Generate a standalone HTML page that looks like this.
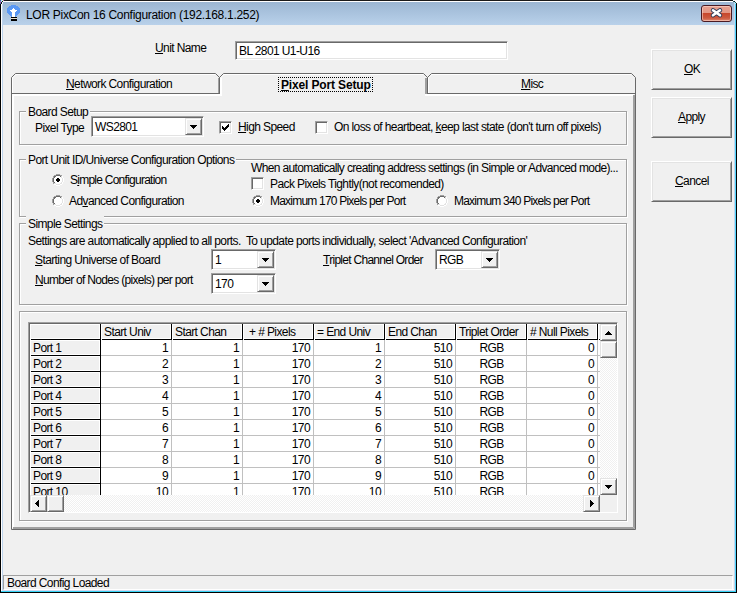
<!DOCTYPE html><html><head><meta charset="utf-8"><style>
*{box-sizing:border-box}
html,body{margin:0;padding:0}
body{width:737px;height:593px;overflow:hidden;background:#f0f0f0;position:relative;font-family:"Liberation Sans",sans-serif;font-size:11px;color:#000}
.a{position:absolute}
.t{position:absolute;white-space:nowrap;line-height:13px;letter-spacing:-0.6px;font-size:12px}
.u{text-decoration:underline;text-underline-offset:1px}
.sunk{position:absolute;background:#fff;border:1px solid;border-color:#a0a0a0 #fff #fff #a0a0a0;box-shadow:inset 1px 1px #696969,inset -1px -1px #e3e3e3}
.btn{position:absolute;background:#f0f0f0;border:1px solid;border-color:#fff #696969 #696969 #fff;box-shadow:inset 1px 1px #e3e3e3,inset -1px -1px #a0a0a0}
.sbtn{position:absolute;background:#f0f0f0;border:1px solid;border-color:#e3e3e3 #696969 #696969 #e3e3e3;box-shadow:inset 1px 1px #fff,inset -1px -1px #a0a0a0}
.grp{position:absolute;border:1px solid;border-color:#a0a0a0 #fff #fff #a0a0a0;box-shadow:inset -1px -1px #a0a0a0, 1px 1px #fff}
.lbl{position:absolute;background:#f0f0f0;white-space:nowrap;line-height:13px;letter-spacing:-0.6px;font-size:12px;padding:2px 2px 0 2px}
.chk{position:absolute;width:13px;height:13px;background:#fff;border:1px solid;border-color:#a0a0a0 #fff #fff #a0a0a0;box-shadow:inset 1px 1px #696969,inset -1px -1px #e3e3e3}
.hl{position:absolute;height:1px}
.vl{position:absolute;width:1px}
</style></head><body>
<div class="a" style="left:0;top:0;width:737px;height:25px;background:linear-gradient(#99b4d1,#b9d1ea)"></div>
<div class="a" style="left:0;top:0;width:737px;height:1px;background:#1a1a1a"></div>
<div class="a" style="left:1px;top:1px;width:734px;height:1px;background:#fff"></div>
<div class="a" style="left:0;top:0;width:1px;height:593px;background:#000"></div>
<div class="a" style="left:1px;top:1px;width:1px;height:591px;background:#fff"></div>
<div class="a" style="left:2px;top:2px;width:1px;height:589px;background:#bcd3ec"></div>
<div class="a" style="left:736px;top:0;width:1px;height:593px;background:#000"></div>
<div class="a" style="left:735px;top:1px;width:1px;height:591px;background:#4fd3fa"></div>
<div class="a" style="left:734px;top:2px;width:1px;height:589px;background:#c4d6ee"></div>
<div class="a" style="left:0;top:592px;width:737px;height:1px;background:#000"></div>
<div class="a" style="left:1px;top:591px;width:735px;height:1px;background:#36d3f5"></div>
<div class="a" style="left:2px;top:590px;width:733px;height:1px;background:#d0d8f0"></div>
<div class="a" style="left:3px;top:589px;width:731px;height:1px;background:#fff"></div>
<svg class="a" style="left:0;top:0" width="5" height="5"><path d="M0 0h1v1h-1zM0 3h1v1h-1z" fill="#4a6ab0"/><path d="M1 0h1v1h-1zM1 1h1v1h-1z" fill="#9ee6f8"/><path d="M2 0h1v1h-1z" fill="#f0f0c0"/><path d="M3 0h1v1h-1zM0 1h1v1h-1zM0 2h1v1h-1z" fill="#a060b0"/><path d="M2 1h1v1h-1zM1 2h1v1h-1zM1 3h1v1h-1z" fill="#111"/><path d="M2 2h1v1h-1zM2 3h1v1h-1z" fill="#f4f8fc"/></svg>
<svg class="a" style="left:732px;top:0" width="5" height="5"><path d="M1 0h1v1h-1zM2 0h1v1h-1zM3 0h1v1h-1zM4 0h1v1h-1zM3 1h1v1h-1zM4 1h1v1h-1zM4 2h1v1h-1z" fill="#fff"/><path d="M1 1h1v1h-1zM3 2h1v1h-1z" fill="#1e5a60"/><path d="M2 1h1v1h-1zM4 3h1v1h-1z" fill="#111"/><path d="M2 2h1v1h-1zM3 3h1v1h-1z" fill="#a8ecf8"/></svg>
<svg class="a" style="left:7px;top:5px" width="14" height="16"><path d="M4 0h1v1h-1zM5 0h1v1h-1zM6 0h1v1h-1zM7 0h1v1h-1zM8 0h1v1h-1zM2 1h1v1h-1zM3 1h1v1h-1zM4 1h1v1h-1zM5 1h1v1h-1zM6 1h1v1h-1zM7 1h1v1h-1zM8 1h1v1h-1zM9 1h1v1h-1zM10 1h1v1h-1zM1 2h1v1h-1zM2 2h1v1h-1zM3 2h1v1h-1zM4 2h1v1h-1zM5 2h1v1h-1zM6 2h1v1h-1zM7 2h1v1h-1zM8 2h1v1h-1zM9 2h1v1h-1zM10 2h1v1h-1zM11 2h1v1h-1zM0 3h1v1h-1zM1 3h1v1h-1zM2 3h1v1h-1zM3 3h1v1h-1zM4 3h1v1h-1zM5 3h1v1h-1zM7 3h1v1h-1zM8 3h1v1h-1zM9 3h1v1h-1zM10 3h1v1h-1zM11 3h1v1h-1zM12 3h1v1h-1zM0 4h1v1h-1zM1 4h1v1h-1zM2 4h1v1h-1zM3 4h1v1h-1zM4 4h1v1h-1zM8 4h1v1h-1zM9 4h1v1h-1zM10 4h1v1h-1zM11 4h1v1h-1zM12 4h1v1h-1zM0 5h1v1h-1zM1 5h1v1h-1zM2 5h1v1h-1zM10 5h1v1h-1zM11 5h1v1h-1zM12 5h1v1h-1zM0 6h1v1h-1zM1 6h1v1h-1zM2 6h1v1h-1zM3 6h1v1h-1zM9 6h1v1h-1zM10 6h1v1h-1zM11 6h1v1h-1zM12 6h1v1h-1zM0 7h1v1h-1zM1 7h1v1h-1zM2 7h1v1h-1zM3 7h1v1h-1zM4 7h1v1h-1zM8 7h1v1h-1zM9 7h1v1h-1zM10 7h1v1h-1zM11 7h1v1h-1zM12 7h1v1h-1zM1 8h1v1h-1zM2 8h1v1h-1zM3 8h1v1h-1zM4 8h1v1h-1zM8 8h1v1h-1zM9 8h1v1h-1zM10 8h1v1h-1zM11 8h1v1h-1zM2 9h1v1h-1zM3 9h1v1h-1zM4 9h1v1h-1zM8 9h1v1h-1zM9 9h1v1h-1zM10 9h1v1h-1zM3 10h1v1h-1zM4 10h1v1h-1zM8 10h1v1h-1zM9 10h1v1h-1zM4 11h1v1h-1zM8 11h1v1h-1z" fill="#5a98f4"/><path d="M6 3h1v1h-1zM5 4h1v1h-1zM6 4h1v1h-1zM7 4h1v1h-1zM3 5h1v1h-1zM4 5h1v1h-1zM5 5h1v1h-1zM6 5h1v1h-1zM7 5h1v1h-1zM8 5h1v1h-1zM9 5h1v1h-1zM4 6h1v1h-1zM5 6h1v1h-1zM6 6h1v1h-1zM7 6h1v1h-1zM8 6h1v1h-1zM5 7h1v1h-1zM6 7h1v1h-1zM7 7h1v1h-1zM5 8h1v1h-1zM6 8h1v1h-1zM7 8h1v1h-1zM5 9h1v1h-1zM6 9h1v1h-1zM7 9h1v1h-1zM5 10h1v1h-1zM6 10h1v1h-1zM7 10h1v1h-1zM5 11h1v1h-1zM6 11h1v1h-1zM7 11h1v1h-1z" fill="#fff"/><path d="M4 12h1v1h-1zM5 12h1v1h-1zM6 12h1v1h-1zM7 12h1v1h-1zM8 12h1v1h-1zM9 12h1v1h-1zM4 14h1v1h-1zM5 14h1v1h-1zM6 14h1v1h-1zM7 14h1v1h-1zM8 14h1v1h-1zM9 14h1v1h-1zM4 15h1v1h-1zM5 15h1v1h-1zM6 15h1v1h-1zM7 15h1v1h-1zM8 15h1v1h-1zM9 15h1v1h-1z" fill="#000"/><path d="M4 13h1v1h-1zM5 13h1v1h-1zM6 13h1v1h-1zM7 13h1v1h-1zM8 13h1v1h-1zM9 13h1v1h-1z" fill="#e8e0d0"/></svg>
<div class="t" style="left:26px;top:8px;font-size:12px;letter-spacing:-0.3px;color:#000;line-height:15px">LOR PixCon 16 Configuration (192.168.1.252)</div>
<div class="a" style="left:701px;top:5px;width:31px;height:17px;border:1px solid #4a1a22;border-radius:3px;background:linear-gradient(#e8a291 0%,#e29684 45%,#c8472c 50%,#cc5a40 80%,#e08870 100%);box-shadow:inset 0 0 0 1px rgba(255,220,210,.55)"></div>
<svg class="a" style="left:709px;top:7px" width="15" height="12" viewBox="0 0 15 12"><path d="M4 3.3L11 8.3M11 3.3L4 8.3" stroke="#2e3a58" stroke-width="4.4" stroke-linecap="round"/><path d="M4 3.3L11 8.3M11 3.3L4 8.3" stroke="#fff" stroke-width="2.6" stroke-linecap="round"/></svg>
<div class="t" style="left:155px;top:42px;"><span class="u">U</span>nit Name</div>
<div class="sunk" style="left:235px;top:41px;width:273px;height:19px"></div>
<div class="t" style="left:239px;top:45px;">BL 2801 U1-U16</div>
<div class="btn" style="left:651px;top:49px;width:81px;height:41px"></div>
<div class="t" style="left:684px;top:63px;"><span class="u">O</span>K</div>
<div class="btn" style="left:651px;top:97px;width:81px;height:41px"></div>
<div class="t" style="left:678px;top:111px;"><span class="u">A</span>pply</div>
<div class="btn" style="left:651px;top:161px;width:81px;height:41px"></div>
<div class="t" style="left:675px;top:175px;"><span class="u">C</span>ancel</div>
<svg class="a" style="left:0;top:0" width="737" height="593"><path d="M11.5 94V529.5H635.5V94" fill="none" stroke="#696969"/><path d="M634.5 95V528.5H13M633.5 95V527.5H13" fill="none" stroke="#a0a0a0"/><path d="M11.5 93.5V77.5L15.5 73.5H215.5L219.5 77.5V93.5" fill="none" stroke="#696969"/><path d="M12.5 93V77.9L15.9 74.5H215" fill="none" stroke="#fff"/><path d="M218.5 78V93" fill="none" stroke="#a0a0a0"/><path d="M427.5 93.5V77.5L431.5 73.5H631.5L635.5 77.5V94" fill="none" stroke="#696969"/><path d="M428.5 93V77.9L431.9 74.5H631" fill="none" stroke="#fff"/><path d="M11 93.5H219.5M427 93.5H635" fill="none" stroke="#696969"/><path d="M12 94.5H222M425 94.5H634M12 95.5H222M425 95.5H633" fill="none" stroke="#fff"/><path d="M12.5 94V528M13.5 94V527" fill="none" stroke="#fff"/><path d="M219.5 94V77.5L223.5 73.5H423.5L427.5 77.5V94" fill="none" stroke="#696969"/><path d="M220.5 96V77.9L223.9 74.5H423M221.5 96V78" fill="none" stroke="#fff"/><path d="M426.5 78V94M425.5 78V94" fill="none" stroke="#a0a0a0"/></svg>
<div class="t" style="left:66px;top:78px;"><span class="u">N</span>etwork Configuration</div>
<div class="t" style="left:281px;top:79px;font-weight:bold;letter-spacing:-0.15px"><span class="u">P</span>ixel Port Setup</div>
<div class="a" style="left:278px;top:77px;width:95px;height:15px;border:1px dotted #000"></div>
<div class="t" style="left:521px;top:78px;"><span class="u">M</span>isc</div>
<div class="a" style="left:19px;top:111px;width:608px;height:34px;border:1px solid #a0a0a0;box-shadow:inset 1px 1px #fff,1px 1px #fff"></div>
<div class="lbl" style="left:26px;top:104px">Board Setup</div>
<div class="t" style="left:35px;top:122px;">Pixel Type</div>
<div class="sunk" style="left:91px;top:116px;width:113px;height:21px"></div>
<div class="t" style="left:95px;top:121px;">WS2801</div>
<div class="sbtn" style="left:185px;top:118px;width:17px;height:17px"></div>
<svg class="a" style="left:190px;top:125px" width="7" height="4"><path d="M0 0h1v1h-1zM1 0h1v1h-1zM2 0h1v1h-1zM3 0h1v1h-1zM4 0h1v1h-1zM5 0h1v1h-1zM6 0h1v1h-1zM1 1h1v1h-1zM2 1h1v1h-1zM3 1h1v1h-1zM4 1h1v1h-1zM5 1h1v1h-1zM2 2h1v1h-1zM3 2h1v1h-1zM4 2h1v1h-1zM3 3h1v1h-1z" fill="#000"/></svg>
<div class="chk" style="left:219px;top:121px"></div>
<svg class="a" style="left:222px;top:124px" width="7" height="7"><path d="M6 0h1v1h-1zM5 1h1v1h-1zM6 1h1v1h-1zM0 2h1v1h-1zM4 2h1v1h-1zM5 2h1v1h-1zM6 2h1v1h-1zM0 3h1v1h-1zM1 3h1v1h-1zM3 3h1v1h-1zM4 3h1v1h-1zM5 3h1v1h-1zM0 4h1v1h-1zM1 4h1v1h-1zM2 4h1v1h-1zM3 4h1v1h-1zM4 4h1v1h-1zM1 5h1v1h-1zM2 5h1v1h-1zM3 5h1v1h-1zM2 6h1v1h-1z" fill="#000"/></svg>
<div class="t" style="left:238px;top:121px;"><span class="u">H</span>igh Speed</div>
<div class="chk" style="left:315px;top:121px"></div>
<div class="t" style="left:334px;top:121px;">On loss of heartbeat, <span class="u">k</span>eep last state (don't turn off pixels)</div>
<div class="a" style="left:19px;top:159px;width:608px;height:58px;border:1px solid #a0a0a0;box-shadow:inset 1px 1px #fff,1px 1px #fff"></div>
<div class="lbl" style="left:26px;top:152px">Port Unit ID/Universe Configuration Options</div>
<svg class="a" style="left:52px;top:174px" width="12" height="12"><path d="M4 0h1v1h-1zM5 0h1v1h-1zM6 0h1v1h-1zM7 0h1v1h-1zM2 1h1v1h-1zM3 1h1v1h-1zM8 1h1v1h-1zM9 1h1v1h-1zM1 2h1v1h-1zM1 3h1v1h-1zM0 4h1v1h-1zM0 5h1v1h-1zM0 6h1v1h-1zM0 7h1v1h-1zM1 8h1v1h-1zM1 9h1v1h-1z" fill="#a0a0a0"/><path d="M4 1h1v1h-1zM5 1h1v1h-1zM6 1h1v1h-1zM7 1h1v1h-1zM2 2h1v1h-1zM3 2h1v1h-1zM8 2h1v1h-1zM2 3h1v1h-1zM1 4h1v1h-1zM1 5h1v1h-1zM1 6h1v1h-1zM1 7h1v1h-1zM2 8h1v1h-1z" fill="#696969"/><path d="M4 2h1v1h-1zM5 2h1v1h-1zM6 2h1v1h-1zM7 2h1v1h-1zM10 2h1v1h-1zM3 3h1v1h-1zM4 3h1v1h-1zM5 3h1v1h-1zM6 3h1v1h-1zM7 3h1v1h-1zM8 3h1v1h-1zM10 3h1v1h-1zM2 4h1v1h-1zM3 4h1v1h-1zM4 4h1v1h-1zM7 4h1v1h-1zM8 4h1v1h-1zM9 4h1v1h-1zM11 4h1v1h-1zM2 5h1v1h-1zM3 5h1v1h-1zM8 5h1v1h-1zM9 5h1v1h-1zM11 5h1v1h-1zM2 6h1v1h-1zM3 6h1v1h-1zM8 6h1v1h-1zM9 6h1v1h-1zM11 6h1v1h-1zM2 7h1v1h-1zM3 7h1v1h-1zM4 7h1v1h-1zM7 7h1v1h-1zM8 7h1v1h-1zM9 7h1v1h-1zM11 7h1v1h-1zM3 8h1v1h-1zM4 8h1v1h-1zM5 8h1v1h-1zM6 8h1v1h-1zM7 8h1v1h-1zM8 8h1v1h-1zM10 8h1v1h-1zM4 9h1v1h-1zM5 9h1v1h-1zM6 9h1v1h-1zM7 9h1v1h-1zM10 9h1v1h-1zM2 10h1v1h-1zM3 10h1v1h-1zM8 10h1v1h-1zM9 10h1v1h-1zM4 11h1v1h-1zM5 11h1v1h-1zM6 11h1v1h-1zM7 11h1v1h-1z" fill="#fff"/><path d="M9 2h1v1h-1zM9 3h1v1h-1zM10 4h1v1h-1zM10 5h1v1h-1zM10 6h1v1h-1zM10 7h1v1h-1zM9 8h1v1h-1zM2 9h1v1h-1zM3 9h1v1h-1zM8 9h1v1h-1zM9 9h1v1h-1zM4 10h1v1h-1zM5 10h1v1h-1zM6 10h1v1h-1zM7 10h1v1h-1z" fill="#e3e3e3"/><path d="M5 4h1v1h-1zM6 4h1v1h-1zM4 5h1v1h-1zM5 5h1v1h-1zM6 5h1v1h-1zM7 5h1v1h-1zM4 6h1v1h-1zM5 6h1v1h-1zM6 6h1v1h-1zM7 6h1v1h-1zM5 7h1v1h-1zM6 7h1v1h-1z" fill="#000"/></svg>
<div class="t" style="left:70px;top:174px;letter-spacing:-0.75px">S<span class="u">i</span>mple Configuration</div>
<svg class="a" style="left:52px;top:195px" width="12" height="12"><path d="M4 0h1v1h-1zM5 0h1v1h-1zM6 0h1v1h-1zM7 0h1v1h-1zM2 1h1v1h-1zM3 1h1v1h-1zM8 1h1v1h-1zM9 1h1v1h-1zM1 2h1v1h-1zM1 3h1v1h-1zM0 4h1v1h-1zM0 5h1v1h-1zM0 6h1v1h-1zM0 7h1v1h-1zM1 8h1v1h-1zM1 9h1v1h-1z" fill="#a0a0a0"/><path d="M4 1h1v1h-1zM5 1h1v1h-1zM6 1h1v1h-1zM7 1h1v1h-1zM2 2h1v1h-1zM3 2h1v1h-1zM8 2h1v1h-1zM2 3h1v1h-1zM1 4h1v1h-1zM1 5h1v1h-1zM1 6h1v1h-1zM1 7h1v1h-1zM2 8h1v1h-1z" fill="#696969"/><path d="M4 2h1v1h-1zM5 2h1v1h-1zM6 2h1v1h-1zM7 2h1v1h-1zM10 2h1v1h-1zM3 3h1v1h-1zM4 3h1v1h-1zM5 3h1v1h-1zM6 3h1v1h-1zM7 3h1v1h-1zM8 3h1v1h-1zM10 3h1v1h-1zM2 4h1v1h-1zM3 4h1v1h-1zM4 4h1v1h-1zM5 4h1v1h-1zM6 4h1v1h-1zM7 4h1v1h-1zM8 4h1v1h-1zM9 4h1v1h-1zM11 4h1v1h-1zM2 5h1v1h-1zM3 5h1v1h-1zM4 5h1v1h-1zM5 5h1v1h-1zM6 5h1v1h-1zM7 5h1v1h-1zM8 5h1v1h-1zM9 5h1v1h-1zM11 5h1v1h-1zM2 6h1v1h-1zM3 6h1v1h-1zM4 6h1v1h-1zM5 6h1v1h-1zM6 6h1v1h-1zM7 6h1v1h-1zM8 6h1v1h-1zM9 6h1v1h-1zM11 6h1v1h-1zM2 7h1v1h-1zM3 7h1v1h-1zM4 7h1v1h-1zM5 7h1v1h-1zM6 7h1v1h-1zM7 7h1v1h-1zM8 7h1v1h-1zM9 7h1v1h-1zM11 7h1v1h-1zM3 8h1v1h-1zM4 8h1v1h-1zM5 8h1v1h-1zM6 8h1v1h-1zM7 8h1v1h-1zM8 8h1v1h-1zM10 8h1v1h-1zM4 9h1v1h-1zM5 9h1v1h-1zM6 9h1v1h-1zM7 9h1v1h-1zM10 9h1v1h-1zM2 10h1v1h-1zM3 10h1v1h-1zM8 10h1v1h-1zM9 10h1v1h-1zM4 11h1v1h-1zM5 11h1v1h-1zM6 11h1v1h-1zM7 11h1v1h-1z" fill="#fff"/><path d="M9 2h1v1h-1zM9 3h1v1h-1zM10 4h1v1h-1zM10 5h1v1h-1zM10 6h1v1h-1zM10 7h1v1h-1zM9 8h1v1h-1zM2 9h1v1h-1zM3 9h1v1h-1zM8 9h1v1h-1zM9 9h1v1h-1zM4 10h1v1h-1zM5 10h1v1h-1zM6 10h1v1h-1zM7 10h1v1h-1z" fill="#e3e3e3"/></svg>
<div class="t" style="left:69px;top:195px;">Ad<span class="u">v</span>anced Configuration</div>
<div class="t" style="left:251px;top:162px;letter-spacing:-0.64px">When automatically creating address settings (in Simple or Advanced mode)...</div>
<div class="chk" style="left:251px;top:177px"></div>
<div class="t" style="left:270px;top:178px;">Pack Pixels Tightly(not recomended)</div>
<svg class="a" style="left:252px;top:195px" width="12" height="12"><path d="M4 0h1v1h-1zM5 0h1v1h-1zM6 0h1v1h-1zM7 0h1v1h-1zM2 1h1v1h-1zM3 1h1v1h-1zM8 1h1v1h-1zM9 1h1v1h-1zM1 2h1v1h-1zM1 3h1v1h-1zM0 4h1v1h-1zM0 5h1v1h-1zM0 6h1v1h-1zM0 7h1v1h-1zM1 8h1v1h-1zM1 9h1v1h-1z" fill="#a0a0a0"/><path d="M4 1h1v1h-1zM5 1h1v1h-1zM6 1h1v1h-1zM7 1h1v1h-1zM2 2h1v1h-1zM3 2h1v1h-1zM8 2h1v1h-1zM2 3h1v1h-1zM1 4h1v1h-1zM1 5h1v1h-1zM1 6h1v1h-1zM1 7h1v1h-1zM2 8h1v1h-1z" fill="#696969"/><path d="M4 2h1v1h-1zM5 2h1v1h-1zM6 2h1v1h-1zM7 2h1v1h-1zM10 2h1v1h-1zM3 3h1v1h-1zM4 3h1v1h-1zM5 3h1v1h-1zM6 3h1v1h-1zM7 3h1v1h-1zM8 3h1v1h-1zM10 3h1v1h-1zM2 4h1v1h-1zM3 4h1v1h-1zM4 4h1v1h-1zM7 4h1v1h-1zM8 4h1v1h-1zM9 4h1v1h-1zM11 4h1v1h-1zM2 5h1v1h-1zM3 5h1v1h-1zM8 5h1v1h-1zM9 5h1v1h-1zM11 5h1v1h-1zM2 6h1v1h-1zM3 6h1v1h-1zM8 6h1v1h-1zM9 6h1v1h-1zM11 6h1v1h-1zM2 7h1v1h-1zM3 7h1v1h-1zM4 7h1v1h-1zM7 7h1v1h-1zM8 7h1v1h-1zM9 7h1v1h-1zM11 7h1v1h-1zM3 8h1v1h-1zM4 8h1v1h-1zM5 8h1v1h-1zM6 8h1v1h-1zM7 8h1v1h-1zM8 8h1v1h-1zM10 8h1v1h-1zM4 9h1v1h-1zM5 9h1v1h-1zM6 9h1v1h-1zM7 9h1v1h-1zM10 9h1v1h-1zM2 10h1v1h-1zM3 10h1v1h-1zM8 10h1v1h-1zM9 10h1v1h-1zM4 11h1v1h-1zM5 11h1v1h-1zM6 11h1v1h-1zM7 11h1v1h-1z" fill="#fff"/><path d="M9 2h1v1h-1zM9 3h1v1h-1zM10 4h1v1h-1zM10 5h1v1h-1zM10 6h1v1h-1zM10 7h1v1h-1zM9 8h1v1h-1zM2 9h1v1h-1zM3 9h1v1h-1zM8 9h1v1h-1zM9 9h1v1h-1zM4 10h1v1h-1zM5 10h1v1h-1zM6 10h1v1h-1zM7 10h1v1h-1z" fill="#e3e3e3"/><path d="M5 4h1v1h-1zM6 4h1v1h-1zM4 5h1v1h-1zM5 5h1v1h-1zM6 5h1v1h-1zM7 5h1v1h-1zM4 6h1v1h-1zM5 6h1v1h-1zM6 6h1v1h-1zM7 6h1v1h-1zM5 7h1v1h-1zM6 7h1v1h-1z" fill="#000"/></svg>
<div class="t" style="left:270px;top:195px;letter-spacing:-0.79px">Maximum 170 Pixels per Port</div>
<svg class="a" style="left:436px;top:195px" width="12" height="12"><path d="M4 0h1v1h-1zM5 0h1v1h-1zM6 0h1v1h-1zM7 0h1v1h-1zM2 1h1v1h-1zM3 1h1v1h-1zM8 1h1v1h-1zM9 1h1v1h-1zM1 2h1v1h-1zM1 3h1v1h-1zM0 4h1v1h-1zM0 5h1v1h-1zM0 6h1v1h-1zM0 7h1v1h-1zM1 8h1v1h-1zM1 9h1v1h-1z" fill="#a0a0a0"/><path d="M4 1h1v1h-1zM5 1h1v1h-1zM6 1h1v1h-1zM7 1h1v1h-1zM2 2h1v1h-1zM3 2h1v1h-1zM8 2h1v1h-1zM2 3h1v1h-1zM1 4h1v1h-1zM1 5h1v1h-1zM1 6h1v1h-1zM1 7h1v1h-1zM2 8h1v1h-1z" fill="#696969"/><path d="M4 2h1v1h-1zM5 2h1v1h-1zM6 2h1v1h-1zM7 2h1v1h-1zM10 2h1v1h-1zM3 3h1v1h-1zM4 3h1v1h-1zM5 3h1v1h-1zM6 3h1v1h-1zM7 3h1v1h-1zM8 3h1v1h-1zM10 3h1v1h-1zM2 4h1v1h-1zM3 4h1v1h-1zM4 4h1v1h-1zM5 4h1v1h-1zM6 4h1v1h-1zM7 4h1v1h-1zM8 4h1v1h-1zM9 4h1v1h-1zM11 4h1v1h-1zM2 5h1v1h-1zM3 5h1v1h-1zM4 5h1v1h-1zM5 5h1v1h-1zM6 5h1v1h-1zM7 5h1v1h-1zM8 5h1v1h-1zM9 5h1v1h-1zM11 5h1v1h-1zM2 6h1v1h-1zM3 6h1v1h-1zM4 6h1v1h-1zM5 6h1v1h-1zM6 6h1v1h-1zM7 6h1v1h-1zM8 6h1v1h-1zM9 6h1v1h-1zM11 6h1v1h-1zM2 7h1v1h-1zM3 7h1v1h-1zM4 7h1v1h-1zM5 7h1v1h-1zM6 7h1v1h-1zM7 7h1v1h-1zM8 7h1v1h-1zM9 7h1v1h-1zM11 7h1v1h-1zM3 8h1v1h-1zM4 8h1v1h-1zM5 8h1v1h-1zM6 8h1v1h-1zM7 8h1v1h-1zM8 8h1v1h-1zM10 8h1v1h-1zM4 9h1v1h-1zM5 9h1v1h-1zM6 9h1v1h-1zM7 9h1v1h-1zM10 9h1v1h-1zM2 10h1v1h-1zM3 10h1v1h-1zM8 10h1v1h-1zM9 10h1v1h-1zM4 11h1v1h-1zM5 11h1v1h-1zM6 11h1v1h-1zM7 11h1v1h-1z" fill="#fff"/><path d="M9 2h1v1h-1zM9 3h1v1h-1zM10 4h1v1h-1zM10 5h1v1h-1zM10 6h1v1h-1zM10 7h1v1h-1zM9 8h1v1h-1zM2 9h1v1h-1zM3 9h1v1h-1zM8 9h1v1h-1zM9 9h1v1h-1zM4 10h1v1h-1zM5 10h1v1h-1zM6 10h1v1h-1zM7 10h1v1h-1z" fill="#e3e3e3"/></svg>
<div class="t" style="left:454px;top:195px;letter-spacing:-0.79px">Maximum 340 Pixels per Port</div>
<div class="a" style="left:19px;top:223px;width:608px;height:82px;border:1px solid #a0a0a0;box-shadow:inset 1px 1px #fff,1px 1px #fff"></div>
<div class="lbl" style="left:26px;top:216px">Simple Settings</div>
<div class="t" style="left:28px;top:235px;">Settings are automatically applied to all ports.&nbsp; To update ports individually, select 'Advanced Configuration'</div>
<div class="t" style="left:35px;top:254px;"><span class="u">S</span>tarting Universe of Board</div>
<div class="sunk" style="left:211px;top:249px;width:65px;height:21px"></div>
<div class="t" style="left:215px;top:254px;">1</div>
<div class="sbtn" style="left:257px;top:251px;width:17px;height:17px"></div>
<svg class="a" style="left:262px;top:258px" width="7" height="4"><path d="M0 0h1v1h-1zM1 0h1v1h-1zM2 0h1v1h-1zM3 0h1v1h-1zM4 0h1v1h-1zM5 0h1v1h-1zM6 0h1v1h-1zM1 1h1v1h-1zM2 1h1v1h-1zM3 1h1v1h-1zM4 1h1v1h-1zM5 1h1v1h-1zM2 2h1v1h-1zM3 2h1v1h-1zM4 2h1v1h-1zM3 3h1v1h-1z" fill="#000"/></svg>
<div class="t" style="left:323px;top:254px;letter-spacing:-0.72px"><span class="u">T</span>riplet Channel Order</div>
<div class="sunk" style="left:435px;top:249px;width:65px;height:21px"></div>
<div class="t" style="left:439px;top:254px;">RGB</div>
<div class="sbtn" style="left:481px;top:251px;width:17px;height:17px"></div>
<svg class="a" style="left:486px;top:258px" width="7" height="4"><path d="M0 0h1v1h-1zM1 0h1v1h-1zM2 0h1v1h-1zM3 0h1v1h-1zM4 0h1v1h-1zM5 0h1v1h-1zM6 0h1v1h-1zM1 1h1v1h-1zM2 1h1v1h-1zM3 1h1v1h-1zM4 1h1v1h-1zM5 1h1v1h-1zM2 2h1v1h-1zM3 2h1v1h-1zM4 2h1v1h-1zM3 3h1v1h-1z" fill="#000"/></svg>
<div class="t" style="left:35px;top:274px;letter-spacing:-0.7px"><span class="u">N</span>umber of Nodes (pixels) per port</div>
<div class="sunk" style="left:211px;top:273px;width:65px;height:21px"></div>
<div class="t" style="left:215px;top:278px;">170</div>
<div class="sbtn" style="left:257px;top:275px;width:17px;height:17px"></div>
<svg class="a" style="left:262px;top:282px" width="7" height="4"><path d="M0 0h1v1h-1zM1 0h1v1h-1zM2 0h1v1h-1zM3 0h1v1h-1zM4 0h1v1h-1zM5 0h1v1h-1zM6 0h1v1h-1zM1 1h1v1h-1zM2 1h1v1h-1zM3 1h1v1h-1zM4 1h1v1h-1zM5 1h1v1h-1zM2 2h1v1h-1zM3 2h1v1h-1zM4 2h1v1h-1zM3 3h1v1h-1z" fill="#000"/></svg>
<div class="a" style="left:19px;top:311px;width:608px;height:210px;border:1px solid #a0a0a0;box-shadow:inset 1px 1px #fff,1px 1px #fff"></div>
<div class="a" style="left:28px;top:322px;width:590px;height:191px;border:1px solid;border-color:#a0a0a0 #fff #fff #a0a0a0;box-shadow:inset 1px 1px #696969,inset -1px -1px #e3e3e3;background:#fff"></div>
<div class="a" style="left:30px;top:324px;width:570px;height:171px;overflow:hidden">
<div class="a" style="left:0px;top:0px;width:70px;height:15px;background:#f0f0f0;border:1px solid #fff"></div>
<div class="a" style="left:70px;top:0px;width:1px;height:16px;background:#000"></div>
<div class="a" style="left:1px;top:15px;width:70px;height:1px;background:#000"></div>
<div class="a" style="left:71px;top:0px;width:70px;height:15px;background:#f0f0f0;border:1px solid #fff"></div>
<div class="a" style="left:141px;top:0px;width:1px;height:16px;background:#000"></div>
<div class="a" style="left:72px;top:15px;width:70px;height:1px;background:#000"></div>
<div class="t" style="left:74px;top:2px">Start Univ</div>
<div class="a" style="left:142px;top:0px;width:70px;height:15px;background:#f0f0f0;border:1px solid #fff"></div>
<div class="a" style="left:212px;top:0px;width:1px;height:16px;background:#000"></div>
<div class="a" style="left:143px;top:15px;width:70px;height:1px;background:#000"></div>
<div class="t" style="left:145px;top:2px">Start Chan</div>
<div class="a" style="left:213px;top:0px;width:70px;height:15px;background:#f0f0f0;border:1px solid #fff"></div>
<div class="a" style="left:283px;top:0px;width:1px;height:16px;background:#000"></div>
<div class="a" style="left:214px;top:15px;width:70px;height:1px;background:#000"></div>
<div class="t" style="left:216px;top:2px"><span style="padding-left:3px">+ # Pixels</span></div>
<div class="a" style="left:284px;top:0px;width:70px;height:15px;background:#f0f0f0;border:1px solid #fff"></div>
<div class="a" style="left:354px;top:0px;width:1px;height:16px;background:#000"></div>
<div class="a" style="left:285px;top:15px;width:70px;height:1px;background:#000"></div>
<div class="t" style="left:287px;top:2px">= End Univ</div>
<div class="a" style="left:355px;top:0px;width:70px;height:15px;background:#f0f0f0;border:1px solid #fff"></div>
<div class="a" style="left:425px;top:0px;width:1px;height:16px;background:#000"></div>
<div class="a" style="left:356px;top:15px;width:70px;height:1px;background:#000"></div>
<div class="t" style="left:358px;top:2px">End Chan</div>
<div class="a" style="left:426px;top:0px;width:70px;height:15px;background:#f0f0f0;border:1px solid #fff"></div>
<div class="a" style="left:496px;top:0px;width:1px;height:16px;background:#000"></div>
<div class="a" style="left:427px;top:15px;width:70px;height:1px;background:#000"></div>
<div class="t" style="left:429px;top:2px">Triplet Order</div>
<div class="a" style="left:497px;top:0px;width:70px;height:15px;background:#f0f0f0;border:1px solid #fff"></div>
<div class="a" style="left:567px;top:0px;width:1px;height:16px;background:#000"></div>
<div class="a" style="left:498px;top:15px;width:70px;height:1px;background:#000"></div>
<div class="t" style="left:500px;top:2px"># Null Pixels</div>
<div class="a" style="left:568px;top:0px;width:70px;height:15px;background:#f0f0f0;border:1px solid #fff"></div>
<div class="a" style="left:638px;top:0px;width:1px;height:16px;background:#000"></div>
<div class="a" style="left:569px;top:15px;width:70px;height:1px;background:#000"></div>
<div class="t" style="left:571px;top:2px"></div>
<div class="a" style="left:0px;top:16px;width:70px;height:15px;background:#f0f0f0;border:1px solid #fff"></div>
<div class="a" style="left:70px;top:16px;width:1px;height:16px;background:#000"></div>
<div class="a" style="left:1px;top:31px;width:70px;height:1px;background:#000"></div>
<div class="t" style="left:3px;top:18px">Port 1</div>
<div class="a" style="left:141px;top:16px;width:1px;height:16px;background:#c0c0c0"></div>
<div class="a" style="left:71px;top:31px;width:71px;height:1px;background:#c0c0c0"></div>
<div class="t" style="left:71px;top:18px;width:67px;text-align:right">1</div>
<div class="a" style="left:212px;top:16px;width:1px;height:16px;background:#c0c0c0"></div>
<div class="a" style="left:142px;top:31px;width:71px;height:1px;background:#c0c0c0"></div>
<div class="t" style="left:142px;top:18px;width:67px;text-align:right">1</div>
<div class="a" style="left:283px;top:16px;width:1px;height:16px;background:#c0c0c0"></div>
<div class="a" style="left:213px;top:31px;width:71px;height:1px;background:#c0c0c0"></div>
<div class="t" style="left:213px;top:18px;width:67px;text-align:right">170</div>
<div class="a" style="left:354px;top:16px;width:1px;height:16px;background:#c0c0c0"></div>
<div class="a" style="left:284px;top:31px;width:71px;height:1px;background:#c0c0c0"></div>
<div class="t" style="left:284px;top:18px;width:67px;text-align:right">1</div>
<div class="a" style="left:425px;top:16px;width:1px;height:16px;background:#c0c0c0"></div>
<div class="a" style="left:355px;top:31px;width:71px;height:1px;background:#c0c0c0"></div>
<div class="t" style="left:355px;top:18px;width:67px;text-align:right">510</div>
<div class="a" style="left:496px;top:16px;width:1px;height:16px;background:#c0c0c0"></div>
<div class="a" style="left:426px;top:31px;width:71px;height:1px;background:#c0c0c0"></div>
<div class="t" style="left:426px;top:18px;width:71px;text-align:center">RGB</div>
<div class="a" style="left:567px;top:16px;width:1px;height:16px;background:#c0c0c0"></div>
<div class="a" style="left:497px;top:31px;width:71px;height:1px;background:#c0c0c0"></div>
<div class="t" style="left:497px;top:18px;width:67px;text-align:right">0</div>
<div class="a" style="left:638px;top:16px;width:1px;height:16px;background:#c0c0c0"></div>
<div class="a" style="left:568px;top:31px;width:71px;height:1px;background:#c0c0c0"></div>
<div class="t" style="left:568px;top:18px;width:67px;text-align:right"></div>
<div class="a" style="left:0px;top:32px;width:70px;height:15px;background:#f0f0f0;border:1px solid #fff"></div>
<div class="a" style="left:70px;top:32px;width:1px;height:16px;background:#000"></div>
<div class="a" style="left:1px;top:47px;width:70px;height:1px;background:#000"></div>
<div class="t" style="left:3px;top:34px">Port 2</div>
<div class="a" style="left:141px;top:32px;width:1px;height:16px;background:#c0c0c0"></div>
<div class="a" style="left:71px;top:47px;width:71px;height:1px;background:#c0c0c0"></div>
<div class="t" style="left:71px;top:34px;width:67px;text-align:right">2</div>
<div class="a" style="left:212px;top:32px;width:1px;height:16px;background:#c0c0c0"></div>
<div class="a" style="left:142px;top:47px;width:71px;height:1px;background:#c0c0c0"></div>
<div class="t" style="left:142px;top:34px;width:67px;text-align:right">1</div>
<div class="a" style="left:283px;top:32px;width:1px;height:16px;background:#c0c0c0"></div>
<div class="a" style="left:213px;top:47px;width:71px;height:1px;background:#c0c0c0"></div>
<div class="t" style="left:213px;top:34px;width:67px;text-align:right">170</div>
<div class="a" style="left:354px;top:32px;width:1px;height:16px;background:#c0c0c0"></div>
<div class="a" style="left:284px;top:47px;width:71px;height:1px;background:#c0c0c0"></div>
<div class="t" style="left:284px;top:34px;width:67px;text-align:right">2</div>
<div class="a" style="left:425px;top:32px;width:1px;height:16px;background:#c0c0c0"></div>
<div class="a" style="left:355px;top:47px;width:71px;height:1px;background:#c0c0c0"></div>
<div class="t" style="left:355px;top:34px;width:67px;text-align:right">510</div>
<div class="a" style="left:496px;top:32px;width:1px;height:16px;background:#c0c0c0"></div>
<div class="a" style="left:426px;top:47px;width:71px;height:1px;background:#c0c0c0"></div>
<div class="t" style="left:426px;top:34px;width:71px;text-align:center">RGB</div>
<div class="a" style="left:567px;top:32px;width:1px;height:16px;background:#c0c0c0"></div>
<div class="a" style="left:497px;top:47px;width:71px;height:1px;background:#c0c0c0"></div>
<div class="t" style="left:497px;top:34px;width:67px;text-align:right">0</div>
<div class="a" style="left:638px;top:32px;width:1px;height:16px;background:#c0c0c0"></div>
<div class="a" style="left:568px;top:47px;width:71px;height:1px;background:#c0c0c0"></div>
<div class="t" style="left:568px;top:34px;width:67px;text-align:right"></div>
<div class="a" style="left:0px;top:48px;width:70px;height:15px;background:#f0f0f0;border:1px solid #fff"></div>
<div class="a" style="left:70px;top:48px;width:1px;height:16px;background:#000"></div>
<div class="a" style="left:1px;top:63px;width:70px;height:1px;background:#000"></div>
<div class="t" style="left:3px;top:50px">Port 3</div>
<div class="a" style="left:141px;top:48px;width:1px;height:16px;background:#c0c0c0"></div>
<div class="a" style="left:71px;top:63px;width:71px;height:1px;background:#c0c0c0"></div>
<div class="t" style="left:71px;top:50px;width:67px;text-align:right">3</div>
<div class="a" style="left:212px;top:48px;width:1px;height:16px;background:#c0c0c0"></div>
<div class="a" style="left:142px;top:63px;width:71px;height:1px;background:#c0c0c0"></div>
<div class="t" style="left:142px;top:50px;width:67px;text-align:right">1</div>
<div class="a" style="left:283px;top:48px;width:1px;height:16px;background:#c0c0c0"></div>
<div class="a" style="left:213px;top:63px;width:71px;height:1px;background:#c0c0c0"></div>
<div class="t" style="left:213px;top:50px;width:67px;text-align:right">170</div>
<div class="a" style="left:354px;top:48px;width:1px;height:16px;background:#c0c0c0"></div>
<div class="a" style="left:284px;top:63px;width:71px;height:1px;background:#c0c0c0"></div>
<div class="t" style="left:284px;top:50px;width:67px;text-align:right">3</div>
<div class="a" style="left:425px;top:48px;width:1px;height:16px;background:#c0c0c0"></div>
<div class="a" style="left:355px;top:63px;width:71px;height:1px;background:#c0c0c0"></div>
<div class="t" style="left:355px;top:50px;width:67px;text-align:right">510</div>
<div class="a" style="left:496px;top:48px;width:1px;height:16px;background:#c0c0c0"></div>
<div class="a" style="left:426px;top:63px;width:71px;height:1px;background:#c0c0c0"></div>
<div class="t" style="left:426px;top:50px;width:71px;text-align:center">RGB</div>
<div class="a" style="left:567px;top:48px;width:1px;height:16px;background:#c0c0c0"></div>
<div class="a" style="left:497px;top:63px;width:71px;height:1px;background:#c0c0c0"></div>
<div class="t" style="left:497px;top:50px;width:67px;text-align:right">0</div>
<div class="a" style="left:638px;top:48px;width:1px;height:16px;background:#c0c0c0"></div>
<div class="a" style="left:568px;top:63px;width:71px;height:1px;background:#c0c0c0"></div>
<div class="t" style="left:568px;top:50px;width:67px;text-align:right"></div>
<div class="a" style="left:0px;top:64px;width:70px;height:15px;background:#f0f0f0;border:1px solid #fff"></div>
<div class="a" style="left:70px;top:64px;width:1px;height:16px;background:#000"></div>
<div class="a" style="left:1px;top:79px;width:70px;height:1px;background:#000"></div>
<div class="t" style="left:3px;top:66px">Port 4</div>
<div class="a" style="left:141px;top:64px;width:1px;height:16px;background:#c0c0c0"></div>
<div class="a" style="left:71px;top:79px;width:71px;height:1px;background:#c0c0c0"></div>
<div class="t" style="left:71px;top:66px;width:67px;text-align:right">4</div>
<div class="a" style="left:212px;top:64px;width:1px;height:16px;background:#c0c0c0"></div>
<div class="a" style="left:142px;top:79px;width:71px;height:1px;background:#c0c0c0"></div>
<div class="t" style="left:142px;top:66px;width:67px;text-align:right">1</div>
<div class="a" style="left:283px;top:64px;width:1px;height:16px;background:#c0c0c0"></div>
<div class="a" style="left:213px;top:79px;width:71px;height:1px;background:#c0c0c0"></div>
<div class="t" style="left:213px;top:66px;width:67px;text-align:right">170</div>
<div class="a" style="left:354px;top:64px;width:1px;height:16px;background:#c0c0c0"></div>
<div class="a" style="left:284px;top:79px;width:71px;height:1px;background:#c0c0c0"></div>
<div class="t" style="left:284px;top:66px;width:67px;text-align:right">4</div>
<div class="a" style="left:425px;top:64px;width:1px;height:16px;background:#c0c0c0"></div>
<div class="a" style="left:355px;top:79px;width:71px;height:1px;background:#c0c0c0"></div>
<div class="t" style="left:355px;top:66px;width:67px;text-align:right">510</div>
<div class="a" style="left:496px;top:64px;width:1px;height:16px;background:#c0c0c0"></div>
<div class="a" style="left:426px;top:79px;width:71px;height:1px;background:#c0c0c0"></div>
<div class="t" style="left:426px;top:66px;width:71px;text-align:center">RGB</div>
<div class="a" style="left:567px;top:64px;width:1px;height:16px;background:#c0c0c0"></div>
<div class="a" style="left:497px;top:79px;width:71px;height:1px;background:#c0c0c0"></div>
<div class="t" style="left:497px;top:66px;width:67px;text-align:right">0</div>
<div class="a" style="left:638px;top:64px;width:1px;height:16px;background:#c0c0c0"></div>
<div class="a" style="left:568px;top:79px;width:71px;height:1px;background:#c0c0c0"></div>
<div class="t" style="left:568px;top:66px;width:67px;text-align:right"></div>
<div class="a" style="left:0px;top:80px;width:70px;height:15px;background:#f0f0f0;border:1px solid #fff"></div>
<div class="a" style="left:70px;top:80px;width:1px;height:16px;background:#000"></div>
<div class="a" style="left:1px;top:95px;width:70px;height:1px;background:#000"></div>
<div class="t" style="left:3px;top:82px">Port 5</div>
<div class="a" style="left:141px;top:80px;width:1px;height:16px;background:#c0c0c0"></div>
<div class="a" style="left:71px;top:95px;width:71px;height:1px;background:#c0c0c0"></div>
<div class="t" style="left:71px;top:82px;width:67px;text-align:right">5</div>
<div class="a" style="left:212px;top:80px;width:1px;height:16px;background:#c0c0c0"></div>
<div class="a" style="left:142px;top:95px;width:71px;height:1px;background:#c0c0c0"></div>
<div class="t" style="left:142px;top:82px;width:67px;text-align:right">1</div>
<div class="a" style="left:283px;top:80px;width:1px;height:16px;background:#c0c0c0"></div>
<div class="a" style="left:213px;top:95px;width:71px;height:1px;background:#c0c0c0"></div>
<div class="t" style="left:213px;top:82px;width:67px;text-align:right">170</div>
<div class="a" style="left:354px;top:80px;width:1px;height:16px;background:#c0c0c0"></div>
<div class="a" style="left:284px;top:95px;width:71px;height:1px;background:#c0c0c0"></div>
<div class="t" style="left:284px;top:82px;width:67px;text-align:right">5</div>
<div class="a" style="left:425px;top:80px;width:1px;height:16px;background:#c0c0c0"></div>
<div class="a" style="left:355px;top:95px;width:71px;height:1px;background:#c0c0c0"></div>
<div class="t" style="left:355px;top:82px;width:67px;text-align:right">510</div>
<div class="a" style="left:496px;top:80px;width:1px;height:16px;background:#c0c0c0"></div>
<div class="a" style="left:426px;top:95px;width:71px;height:1px;background:#c0c0c0"></div>
<div class="t" style="left:426px;top:82px;width:71px;text-align:center">RGB</div>
<div class="a" style="left:567px;top:80px;width:1px;height:16px;background:#c0c0c0"></div>
<div class="a" style="left:497px;top:95px;width:71px;height:1px;background:#c0c0c0"></div>
<div class="t" style="left:497px;top:82px;width:67px;text-align:right">0</div>
<div class="a" style="left:638px;top:80px;width:1px;height:16px;background:#c0c0c0"></div>
<div class="a" style="left:568px;top:95px;width:71px;height:1px;background:#c0c0c0"></div>
<div class="t" style="left:568px;top:82px;width:67px;text-align:right"></div>
<div class="a" style="left:0px;top:96px;width:70px;height:15px;background:#f0f0f0;border:1px solid #fff"></div>
<div class="a" style="left:70px;top:96px;width:1px;height:16px;background:#000"></div>
<div class="a" style="left:1px;top:111px;width:70px;height:1px;background:#000"></div>
<div class="t" style="left:3px;top:98px">Port 6</div>
<div class="a" style="left:141px;top:96px;width:1px;height:16px;background:#c0c0c0"></div>
<div class="a" style="left:71px;top:111px;width:71px;height:1px;background:#c0c0c0"></div>
<div class="t" style="left:71px;top:98px;width:67px;text-align:right">6</div>
<div class="a" style="left:212px;top:96px;width:1px;height:16px;background:#c0c0c0"></div>
<div class="a" style="left:142px;top:111px;width:71px;height:1px;background:#c0c0c0"></div>
<div class="t" style="left:142px;top:98px;width:67px;text-align:right">1</div>
<div class="a" style="left:283px;top:96px;width:1px;height:16px;background:#c0c0c0"></div>
<div class="a" style="left:213px;top:111px;width:71px;height:1px;background:#c0c0c0"></div>
<div class="t" style="left:213px;top:98px;width:67px;text-align:right">170</div>
<div class="a" style="left:354px;top:96px;width:1px;height:16px;background:#c0c0c0"></div>
<div class="a" style="left:284px;top:111px;width:71px;height:1px;background:#c0c0c0"></div>
<div class="t" style="left:284px;top:98px;width:67px;text-align:right">6</div>
<div class="a" style="left:425px;top:96px;width:1px;height:16px;background:#c0c0c0"></div>
<div class="a" style="left:355px;top:111px;width:71px;height:1px;background:#c0c0c0"></div>
<div class="t" style="left:355px;top:98px;width:67px;text-align:right">510</div>
<div class="a" style="left:496px;top:96px;width:1px;height:16px;background:#c0c0c0"></div>
<div class="a" style="left:426px;top:111px;width:71px;height:1px;background:#c0c0c0"></div>
<div class="t" style="left:426px;top:98px;width:71px;text-align:center">RGB</div>
<div class="a" style="left:567px;top:96px;width:1px;height:16px;background:#c0c0c0"></div>
<div class="a" style="left:497px;top:111px;width:71px;height:1px;background:#c0c0c0"></div>
<div class="t" style="left:497px;top:98px;width:67px;text-align:right">0</div>
<div class="a" style="left:638px;top:96px;width:1px;height:16px;background:#c0c0c0"></div>
<div class="a" style="left:568px;top:111px;width:71px;height:1px;background:#c0c0c0"></div>
<div class="t" style="left:568px;top:98px;width:67px;text-align:right"></div>
<div class="a" style="left:0px;top:112px;width:70px;height:15px;background:#f0f0f0;border:1px solid #fff"></div>
<div class="a" style="left:70px;top:112px;width:1px;height:16px;background:#000"></div>
<div class="a" style="left:1px;top:127px;width:70px;height:1px;background:#000"></div>
<div class="t" style="left:3px;top:114px">Port 7</div>
<div class="a" style="left:141px;top:112px;width:1px;height:16px;background:#c0c0c0"></div>
<div class="a" style="left:71px;top:127px;width:71px;height:1px;background:#c0c0c0"></div>
<div class="t" style="left:71px;top:114px;width:67px;text-align:right">7</div>
<div class="a" style="left:212px;top:112px;width:1px;height:16px;background:#c0c0c0"></div>
<div class="a" style="left:142px;top:127px;width:71px;height:1px;background:#c0c0c0"></div>
<div class="t" style="left:142px;top:114px;width:67px;text-align:right">1</div>
<div class="a" style="left:283px;top:112px;width:1px;height:16px;background:#c0c0c0"></div>
<div class="a" style="left:213px;top:127px;width:71px;height:1px;background:#c0c0c0"></div>
<div class="t" style="left:213px;top:114px;width:67px;text-align:right">170</div>
<div class="a" style="left:354px;top:112px;width:1px;height:16px;background:#c0c0c0"></div>
<div class="a" style="left:284px;top:127px;width:71px;height:1px;background:#c0c0c0"></div>
<div class="t" style="left:284px;top:114px;width:67px;text-align:right">7</div>
<div class="a" style="left:425px;top:112px;width:1px;height:16px;background:#c0c0c0"></div>
<div class="a" style="left:355px;top:127px;width:71px;height:1px;background:#c0c0c0"></div>
<div class="t" style="left:355px;top:114px;width:67px;text-align:right">510</div>
<div class="a" style="left:496px;top:112px;width:1px;height:16px;background:#c0c0c0"></div>
<div class="a" style="left:426px;top:127px;width:71px;height:1px;background:#c0c0c0"></div>
<div class="t" style="left:426px;top:114px;width:71px;text-align:center">RGB</div>
<div class="a" style="left:567px;top:112px;width:1px;height:16px;background:#c0c0c0"></div>
<div class="a" style="left:497px;top:127px;width:71px;height:1px;background:#c0c0c0"></div>
<div class="t" style="left:497px;top:114px;width:67px;text-align:right">0</div>
<div class="a" style="left:638px;top:112px;width:1px;height:16px;background:#c0c0c0"></div>
<div class="a" style="left:568px;top:127px;width:71px;height:1px;background:#c0c0c0"></div>
<div class="t" style="left:568px;top:114px;width:67px;text-align:right"></div>
<div class="a" style="left:0px;top:128px;width:70px;height:15px;background:#f0f0f0;border:1px solid #fff"></div>
<div class="a" style="left:70px;top:128px;width:1px;height:16px;background:#000"></div>
<div class="a" style="left:1px;top:143px;width:70px;height:1px;background:#000"></div>
<div class="t" style="left:3px;top:130px">Port 8</div>
<div class="a" style="left:141px;top:128px;width:1px;height:16px;background:#c0c0c0"></div>
<div class="a" style="left:71px;top:143px;width:71px;height:1px;background:#c0c0c0"></div>
<div class="t" style="left:71px;top:130px;width:67px;text-align:right">8</div>
<div class="a" style="left:212px;top:128px;width:1px;height:16px;background:#c0c0c0"></div>
<div class="a" style="left:142px;top:143px;width:71px;height:1px;background:#c0c0c0"></div>
<div class="t" style="left:142px;top:130px;width:67px;text-align:right">1</div>
<div class="a" style="left:283px;top:128px;width:1px;height:16px;background:#c0c0c0"></div>
<div class="a" style="left:213px;top:143px;width:71px;height:1px;background:#c0c0c0"></div>
<div class="t" style="left:213px;top:130px;width:67px;text-align:right">170</div>
<div class="a" style="left:354px;top:128px;width:1px;height:16px;background:#c0c0c0"></div>
<div class="a" style="left:284px;top:143px;width:71px;height:1px;background:#c0c0c0"></div>
<div class="t" style="left:284px;top:130px;width:67px;text-align:right">8</div>
<div class="a" style="left:425px;top:128px;width:1px;height:16px;background:#c0c0c0"></div>
<div class="a" style="left:355px;top:143px;width:71px;height:1px;background:#c0c0c0"></div>
<div class="t" style="left:355px;top:130px;width:67px;text-align:right">510</div>
<div class="a" style="left:496px;top:128px;width:1px;height:16px;background:#c0c0c0"></div>
<div class="a" style="left:426px;top:143px;width:71px;height:1px;background:#c0c0c0"></div>
<div class="t" style="left:426px;top:130px;width:71px;text-align:center">RGB</div>
<div class="a" style="left:567px;top:128px;width:1px;height:16px;background:#c0c0c0"></div>
<div class="a" style="left:497px;top:143px;width:71px;height:1px;background:#c0c0c0"></div>
<div class="t" style="left:497px;top:130px;width:67px;text-align:right">0</div>
<div class="a" style="left:638px;top:128px;width:1px;height:16px;background:#c0c0c0"></div>
<div class="a" style="left:568px;top:143px;width:71px;height:1px;background:#c0c0c0"></div>
<div class="t" style="left:568px;top:130px;width:67px;text-align:right"></div>
<div class="a" style="left:0px;top:144px;width:70px;height:15px;background:#f0f0f0;border:1px solid #fff"></div>
<div class="a" style="left:70px;top:144px;width:1px;height:16px;background:#000"></div>
<div class="a" style="left:1px;top:159px;width:70px;height:1px;background:#000"></div>
<div class="t" style="left:3px;top:146px">Port 9</div>
<div class="a" style="left:141px;top:144px;width:1px;height:16px;background:#c0c0c0"></div>
<div class="a" style="left:71px;top:159px;width:71px;height:1px;background:#c0c0c0"></div>
<div class="t" style="left:71px;top:146px;width:67px;text-align:right">9</div>
<div class="a" style="left:212px;top:144px;width:1px;height:16px;background:#c0c0c0"></div>
<div class="a" style="left:142px;top:159px;width:71px;height:1px;background:#c0c0c0"></div>
<div class="t" style="left:142px;top:146px;width:67px;text-align:right">1</div>
<div class="a" style="left:283px;top:144px;width:1px;height:16px;background:#c0c0c0"></div>
<div class="a" style="left:213px;top:159px;width:71px;height:1px;background:#c0c0c0"></div>
<div class="t" style="left:213px;top:146px;width:67px;text-align:right">170</div>
<div class="a" style="left:354px;top:144px;width:1px;height:16px;background:#c0c0c0"></div>
<div class="a" style="left:284px;top:159px;width:71px;height:1px;background:#c0c0c0"></div>
<div class="t" style="left:284px;top:146px;width:67px;text-align:right">9</div>
<div class="a" style="left:425px;top:144px;width:1px;height:16px;background:#c0c0c0"></div>
<div class="a" style="left:355px;top:159px;width:71px;height:1px;background:#c0c0c0"></div>
<div class="t" style="left:355px;top:146px;width:67px;text-align:right">510</div>
<div class="a" style="left:496px;top:144px;width:1px;height:16px;background:#c0c0c0"></div>
<div class="a" style="left:426px;top:159px;width:71px;height:1px;background:#c0c0c0"></div>
<div class="t" style="left:426px;top:146px;width:71px;text-align:center">RGB</div>
<div class="a" style="left:567px;top:144px;width:1px;height:16px;background:#c0c0c0"></div>
<div class="a" style="left:497px;top:159px;width:71px;height:1px;background:#c0c0c0"></div>
<div class="t" style="left:497px;top:146px;width:67px;text-align:right">0</div>
<div class="a" style="left:638px;top:144px;width:1px;height:16px;background:#c0c0c0"></div>
<div class="a" style="left:568px;top:159px;width:71px;height:1px;background:#c0c0c0"></div>
<div class="t" style="left:568px;top:146px;width:67px;text-align:right"></div>
<div class="a" style="left:0px;top:160px;width:70px;height:15px;background:#f0f0f0;border:1px solid #fff"></div>
<div class="a" style="left:70px;top:160px;width:1px;height:16px;background:#000"></div>
<div class="a" style="left:1px;top:175px;width:70px;height:1px;background:#000"></div>
<div class="t" style="left:3px;top:162px">Port 10</div>
<div class="a" style="left:141px;top:160px;width:1px;height:16px;background:#c0c0c0"></div>
<div class="a" style="left:71px;top:175px;width:71px;height:1px;background:#c0c0c0"></div>
<div class="t" style="left:71px;top:162px;width:67px;text-align:right">10</div>
<div class="a" style="left:212px;top:160px;width:1px;height:16px;background:#c0c0c0"></div>
<div class="a" style="left:142px;top:175px;width:71px;height:1px;background:#c0c0c0"></div>
<div class="t" style="left:142px;top:162px;width:67px;text-align:right">1</div>
<div class="a" style="left:283px;top:160px;width:1px;height:16px;background:#c0c0c0"></div>
<div class="a" style="left:213px;top:175px;width:71px;height:1px;background:#c0c0c0"></div>
<div class="t" style="left:213px;top:162px;width:67px;text-align:right">170</div>
<div class="a" style="left:354px;top:160px;width:1px;height:16px;background:#c0c0c0"></div>
<div class="a" style="left:284px;top:175px;width:71px;height:1px;background:#c0c0c0"></div>
<div class="t" style="left:284px;top:162px;width:67px;text-align:right">10</div>
<div class="a" style="left:425px;top:160px;width:1px;height:16px;background:#c0c0c0"></div>
<div class="a" style="left:355px;top:175px;width:71px;height:1px;background:#c0c0c0"></div>
<div class="t" style="left:355px;top:162px;width:67px;text-align:right">510</div>
<div class="a" style="left:496px;top:160px;width:1px;height:16px;background:#c0c0c0"></div>
<div class="a" style="left:426px;top:175px;width:71px;height:1px;background:#c0c0c0"></div>
<div class="t" style="left:426px;top:162px;width:71px;text-align:center">RGB</div>
<div class="a" style="left:567px;top:160px;width:1px;height:16px;background:#c0c0c0"></div>
<div class="a" style="left:497px;top:175px;width:71px;height:1px;background:#c0c0c0"></div>
<div class="t" style="left:497px;top:162px;width:67px;text-align:right">0</div>
<div class="a" style="left:638px;top:160px;width:1px;height:16px;background:#c0c0c0"></div>
<div class="a" style="left:568px;top:175px;width:71px;height:1px;background:#c0c0c0"></div>
<div class="t" style="left:568px;top:162px;width:67px;text-align:right"></div>
</div>
<div class="a" style="left:600px;top:324px;width:17px;height:171px;background:repeating-conic-gradient(#fff 0 25%,#f0f0f0 0 50%) 0 0/2px 2px"></div>
<div class="sbtn" style="left:600px;top:324px;width:17px;height:17px"></div>
<svg class="a" style="left:605px;top:331px" width="7" height="4"><path d="M3 0h1v1h-1zM2 1h1v1h-1zM3 1h1v1h-1zM4 1h1v1h-1zM1 2h1v1h-1zM2 2h1v1h-1zM3 2h1v1h-1zM4 2h1v1h-1zM5 2h1v1h-1zM0 3h1v1h-1zM1 3h1v1h-1zM2 3h1v1h-1zM3 3h1v1h-1zM4 3h1v1h-1zM5 3h1v1h-1zM6 3h1v1h-1z" fill="#000"/></svg>
<div class="sbtn" style="left:600px;top:341px;width:17px;height:17px"></div>
<div class="sbtn" style="left:600px;top:478px;width:17px;height:17px"></div>
<svg class="a" style="left:605px;top:485px" width="7" height="4"><path d="M0 0h1v1h-1zM1 0h1v1h-1zM2 0h1v1h-1zM3 0h1v1h-1zM4 0h1v1h-1zM5 0h1v1h-1zM6 0h1v1h-1zM1 1h1v1h-1zM2 1h1v1h-1zM3 1h1v1h-1zM4 1h1v1h-1zM5 1h1v1h-1zM2 2h1v1h-1zM3 2h1v1h-1zM4 2h1v1h-1zM3 3h1v1h-1z" fill="#000"/></svg>
<div class="a" style="left:30px;top:495px;width:570px;height:17px;background:repeating-conic-gradient(#fff 0 25%,#f0f0f0 0 50%) 0 0/2px 2px"></div>
<div class="sbtn" style="left:30px;top:495px;width:17px;height:17px"></div>
<svg class="a" style="left:35px;top:500px" width="4" height="7"><path d="M3 0h1v1h-1zM2 1h1v1h-1zM3 1h1v1h-1zM1 2h1v1h-1zM2 2h1v1h-1zM3 2h1v1h-1zM0 3h1v1h-1zM1 3h1v1h-1zM2 3h1v1h-1zM3 3h1v1h-1zM1 4h1v1h-1zM2 4h1v1h-1zM3 4h1v1h-1zM2 5h1v1h-1zM3 5h1v1h-1zM3 6h1v1h-1z" fill="#000"/></svg>
<div class="sbtn" style="left:47px;top:495px;width:17px;height:17px"></div>
<div class="sbtn" style="left:583px;top:495px;width:17px;height:17px"></div>
<svg class="a" style="left:590px;top:500px" width="4" height="7"><path d="M0 0h1v1h-1zM0 1h1v1h-1zM1 1h1v1h-1zM0 2h1v1h-1zM1 2h1v1h-1zM2 2h1v1h-1zM0 3h1v1h-1zM1 3h1v1h-1zM2 3h1v1h-1zM3 3h1v1h-1zM0 4h1v1h-1zM1 4h1v1h-1zM2 4h1v1h-1zM0 5h1v1h-1zM1 5h1v1h-1zM0 6h1v1h-1z" fill="#000"/></svg>
<div class="a" style="left:600px;top:495px;width:17px;height:17px;background:#f0f0f0"></div>
<div class="a" style="left:3px;top:575px;width:730px;height:15px;border:1px solid;border-color:#a0a0a0 #fff #fff #a0a0a0"></div>
<div class="t" style="left:7px;top:577px;">Board Config Loaded</div>
</body></html>
